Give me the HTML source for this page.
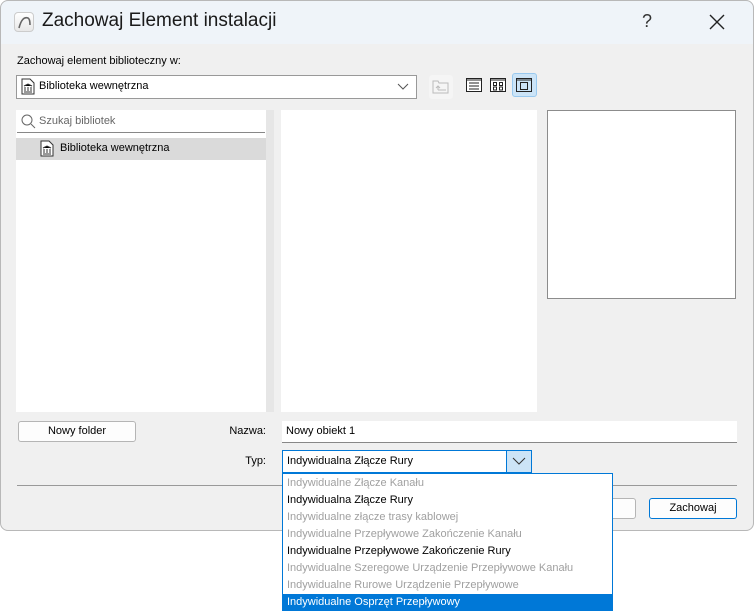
<!DOCTYPE html>
<html><head><meta charset="utf-8"><style>
*{box-sizing:border-box;margin:0;padding:0}
body{width:754px;height:611px;background:#fff;font-family:"Segoe UI","Liberation Sans",sans-serif;font-size:11px;color:#000;position:relative;overflow:hidden}
.a{position:absolute}
.win{left:0;top:0;width:754px;height:531px;border-radius:8px;background:#f0f0f0;overflow:hidden}
.frame{left:0;top:0;width:754px;height:531px;border:1px solid #b8b8b8;border-radius:8px;pointer-events:none}
.title{left:0;top:0;width:754px;height:44px;background:#eff4f9}
.white{background:#fff}
.btn{background:#fdfdfd;border:1px solid #b5b5b5;border-radius:3px;text-align:center;line-height:18px}
.dd div{height:17px;line-height:17px;padding-left:4px;color:#a0a0a0;white-space:nowrap}
.dd div.b{color:#000}
</style></head><body>
<div class="a win">
 <div class="a title"></div>
 <div class="a" style="left:14px;top:12px;width:20px;height:20px;border:1px solid #ccc;border-radius:4px;background:linear-gradient(#fff,#e8e8e8)">
  <svg width="18" height="18" style="position:absolute;left:0;top:0"><path d="M4 15 Q7 3 13 5 Q15 6 15 12" stroke="#666" stroke-width="1.6" fill="none"/></svg></div>
 <div class="a" style="left:42px;top:10px;font-size:19px;color:#1a1a1a">Zachowaj Element instalacji</div>
 <div class="a" style="left:642px;top:11px;font-size:18px;color:#333">?</div>
 <svg class="a" style="left:708px;top:13px" width="18" height="18"><path d="M2 2L16 16M16 2L2 16" stroke="#222" stroke-width="1.4"/></svg>
 <div class="a" style="left:17px;top:55px">Zachowaj element biblioteczny w:</div>
 <div class="a white" style="left:16px;top:75px;width:401px;height:24px;border:1px solid #999"></div>
 <svg class="a" style="left:21px;top:78px" width="14" height="17"><path d="M1 1H9L13 5V16H1Z" fill="#fff" stroke="#333"/><path d="M3 8L7 6L11 8M4 9V13M7 9V13M10 9V13M3 14H11" stroke="#333"/></svg>
 <div class="a" style="left:39px;top:80px">Biblioteka wewnętrzna</div>
 <svg class="a" style="left:397px;top:83px" width="12" height="8"><path d="M1 1L6 6L11 1" stroke="#555" fill="none"/></svg>
 <div class="a" style="left:429px;top:75px;width:24px;height:24px;background:#f5f5f5;border-radius:3px"></div>
 <svg class="a" style="left:432px;top:79px" width="18" height="16"><path d="M1 2H6L7 4H16V14H1Z" fill="none" stroke="#bbb"/><path d="M6 11V7M4 9L6 7L8 9M6 11H14" stroke="#bbb" fill="none"/></svg>
 <svg class="a" style="left:466px;top:78px" width="17" height="15"><rect x=".5" y=".5" width="15" height="13" fill="#fff" stroke="#222"/><path d="M1 2H15M3 5H13M3 8H13M3 11H13" stroke="#222"/></svg>
 <svg class="a" style="left:490px;top:78px" width="17" height="15"><rect x=".5" y=".5" width="15" height="13" fill="#fff" stroke="#222"/><path d="M1 2H15" stroke="#222"/><rect x="3.5" y="4.5" width="3" height="3" fill="none" stroke="#222"/><rect x="9.5" y="4.5" width="3" height="3" fill="none" stroke="#222"/><rect x="3.5" y="9" width="3" height="3" fill="none" stroke="#222"/><rect x="9.5" y="9" width="3" height="3" fill="none" stroke="#222"/></svg>
 <div class="a" style="left:512px;top:73px;width:25px;height:24px;background:#cce4f7;border:1px solid #99c9ef;border-radius:3px"></div>
 <svg class="a" style="left:516px;top:78px" width="17" height="15"><rect x=".5" y=".5" width="15" height="13" fill="none" stroke="#222"/><path d="M1 2H15" stroke="#222"/><rect x="4.5" y="4.5" width="7" height="7" fill="none" stroke="#222"/></svg>
 <div class="a white" style="left:16px;top:110px;width:250px;height:302px"></div>
 <div class="a white" style="left:17px;top:110px;width:248px;height:23px;border-bottom:1px solid #888"></div>
 <svg class="a" style="left:21px;top:114px" width="15" height="15"><circle cx="6" cy="6" r="5" fill="none" stroke="#666"/><path d="M10 10L14 14" stroke="#666"/></svg>
 <div class="a" style="left:39px;top:115px;color:#666">Szukaj bibliotek</div>
 <div class="a" style="left:16px;top:138px;width:250px;height:22px;background:#dadada"></div>
 <svg class="a" style="left:40px;top:140px" width="14" height="17"><path d="M1 1H9L13 5V16H1Z" fill="#fff" stroke="#333"/><path d="M3 8L7 6L11 8M4 9V13M7 9V13M10 9V13M3 14H11" stroke="#333"/></svg>
 <div class="a" style="left:60px;top:142px">Biblioteka wewnętrzna</div>
 <div class="a" style="left:266px;top:110px;width:8px;height:302px;background:#e6e6e6"></div>
 <div class="a white" style="left:281px;top:110px;width:256px;height:302px"></div>
 <div class="a white" style="left:547px;top:110px;width:189px;height:189px;border:1px solid #8c8c8c"></div>
 <div class="a btn" style="left:18px;top:421px;width:118px;height:21px">Nowy folder</div>
 <div class="a" style="left:210px;top:425px;width:56px;text-align:right">Nazwa:</div>
 <div class="a white" style="left:282px;top:421px;width:455px;height:22px;border-bottom:1px solid #888;padding:4px 4px">Nowy obiekt 1</div>
 <div class="a" style="left:210px;top:455px;width:56px;text-align:right">Typ:</div>
 <div class="a white" style="left:282px;top:450px;width:250px;height:23px;border:1px solid #0078d7;padding:4px 4px">Indywidualna Złącze Rury</div>
 <div class="a" style="left:506px;top:450px;width:26px;height:23px;background:#cce4f7;border:1px solid #0078d7"></div>
 <svg class="a" style="left:512px;top:457px" width="14" height="9"><path d="M1 1L7 7L13 1" stroke="#333" fill="none"/></svg>
 <div class="a" style="left:17px;top:485px;width:720px;height:1px;background:#999"></div>
 <div class="a btn" style="left:600px;top:498px;width:36px;height:21px"></div>
 <div class="a btn" style="left:649px;top:498px;width:88px;height:21px;border-color:#0078d7">Zachowaj</div>
</div>
<div class="a frame"></div>
<div class="a white dd" style="left:282px;top:473px;width:331px;height:138px;border:1px solid #0078d7;padding-top:1px">
 <div>Indywidualne Złącze Kanału</div>
 <div class="b">Indywidualna Złącze Rury</div>
 <div>Indywidualne złącze trasy kablowej</div>
 <div>Indywidualne Przepływowe Zakończenie Kanału</div>
 <div class="b">Indywidualne Przepływowe Zakończenie Rury</div>
 <div>Indywidualne Szeregowe Urządzenie Przepływowe Kanału</div>
 <div>Indywidualne Rurowe Urządzenie Przepływowe</div>
 <div class="b" style="background:#0078d7;color:#fff">Indywidualne Osprzęt Przepływowy</div>
</div>
</body></html>
